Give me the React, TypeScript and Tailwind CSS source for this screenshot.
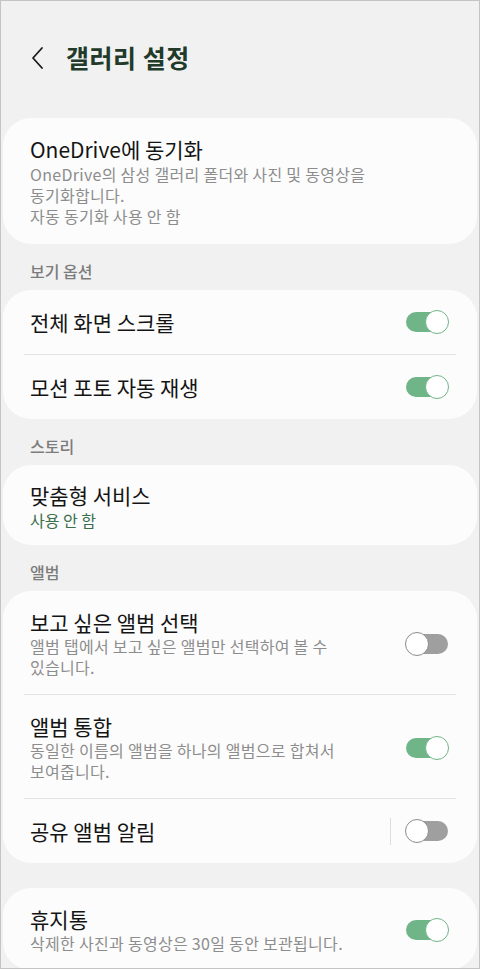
import React from 'react';

// Samsung Gallery settings screen (Korean)

function Toggle({ on }: { on: boolean }) {
  return (
    <div className="relative w-[44px] h-[24px] shrink-0">
      <div
        className={`absolute left-[1px] right-[1px] top-[2px] h-[20px] rounded-full ${on ? 'bg-[#6fb588]' : 'bg-[#9f9f9f]'}`}
      />
      <div
        className={`absolute top-0 w-[24px] h-[24px] rounded-full bg-white border-[1.5px] ${on ? 'right-0 border-[#6fb588]' : 'left-0 border-[#8c8c8c]'}`}
      />
    </div>
  );
}

function Row({
  title,
  sub,
  on,
  split,
}: {
  title: string;
  sub?: string[];
  on?: boolean;
  split?: boolean;
}) {
  return (
    <div className={`flex items-center pl-[27px] pr-[28px] ${sub ? 'pt-[18px] pb-[16px]' : 'h-[64px]'}`}>
      <div className="flex-1 min-w-0">
        <div className="text-[21px] leading-[26px] text-[#141414]">{title}</div>
        {sub && (
          <div className="mt-[1px] text-[16px] leading-[21px] tracking-[0.3px] text-[#8d8d8d]">
            {sub.map((s) => (
              <div key={s}>{s}</div>
            ))}
          </div>
        )}
      </div>
      {split && <div className="w-px h-[27px] bg-[#dcdcdc] mr-[14px]" />}
      {on !== undefined && <Toggle on={on} />}
    </div>
  );
}

function Divider() {
  return <div className="mx-[21px] h-px bg-[#e4e4e4]" />;
}

function SectionLabel({ text }: { text: string }) {
  return (
    <div className="pl-[29px] pt-[17px] pb-[9px] text-[16px] leading-[20px] font-medium text-[#7c7c7c]">
      {text}
    </div>
  );
}

export default function App() {
  return (
    <div className="w-[480px] h-[969px] overflow-hidden bg-[#f1f1f1] border border-[#c4c4c4] font-['Noto_Sans_CJK_KR','Noto_Sans',sans-serif]">
      {/* Header */}
      <div className="h-[117px] flex items-center pl-[28px] pb-[4px]">
        <svg width="18" height="24" viewBox="0 0 18 24" fill="none">
          <path d="M13 2 L4 12 L13 22" stroke="#1b1b1b" strokeWidth="1.8" strokeLinecap="round" strokeLinejoin="round" />
        </svg>
        <h1 className="ml-[19px] text-[25px] font-bold text-[#213a29] tracking-[0.5px]">갤러리 설정</h1>
      </div>

      {/* OneDrive */}
      <div className="mx-[2px] bg-[#fcfcfc] rounded-[28px] pl-[27px] pr-[28px] pt-[18px] pb-[17px]">
        <div className="text-[21px] leading-[26px] text-[#141414]">OneDrive에 동기화</div>
        <div className="mt-[2px] text-[16px] leading-[21px] tracking-[0.3px] text-[#8d8d8d]">
          <div>OneDrive의 삼성 갤러리 폴더와 사진 및 동영상을</div>
          <div>동기화합니다.</div>
          <div>자동 동기화 사용 안 함</div>
        </div>
      </div>

      <SectionLabel text="보기 옵션" />
      <div className="mx-[2px] bg-[#fcfcfc] rounded-[28px]">
        <Row title="전체 화면 스크롤" on />
        <Divider />
        <Row title="모션 포토 자동 재생" on />
      </div>

      <SectionLabel text="스토리" />
      <div className="mx-[2px] bg-[#fcfcfc] rounded-[28px] pl-[27px] pr-[28px] pt-[17px] pb-[14px]">
        <div className="text-[21px] leading-[26px] text-[#141414]">맞춤형 서비스</div>
        <div className="mt-[2px] text-[16px] leading-[21px] text-[#3b6e4b]">사용 안 함</div>
      </div>

      <SectionLabel text="앨범" />
      <div className="mx-[2px] bg-[#fcfcfc] rounded-[28px]">
        <Row title="보고 싶은 앨범 선택" sub={['앨범 탭에서 보고 싶은 앨범만 선택하여 볼 수', '있습니다.']} on={false} />
        <Divider />
        <Row title="앨범 통합" sub={['동일한 이름의 앨범을 하나의 앨범으로 합쳐서', '보여줍니다.']} on />
        <Divider />
        <Row title="공유 앨범 알림" on={false} split />
      </div>

      <div className="h-[25px]" />
      <div className="mx-[2px] bg-[#fcfcfc] rounded-[28px]">
        <Row title="휴지통" sub={['삭제한 사진과 동영상은 30일 동안 보관됩니다.']} on />
      </div>
    </div>
  );
}
